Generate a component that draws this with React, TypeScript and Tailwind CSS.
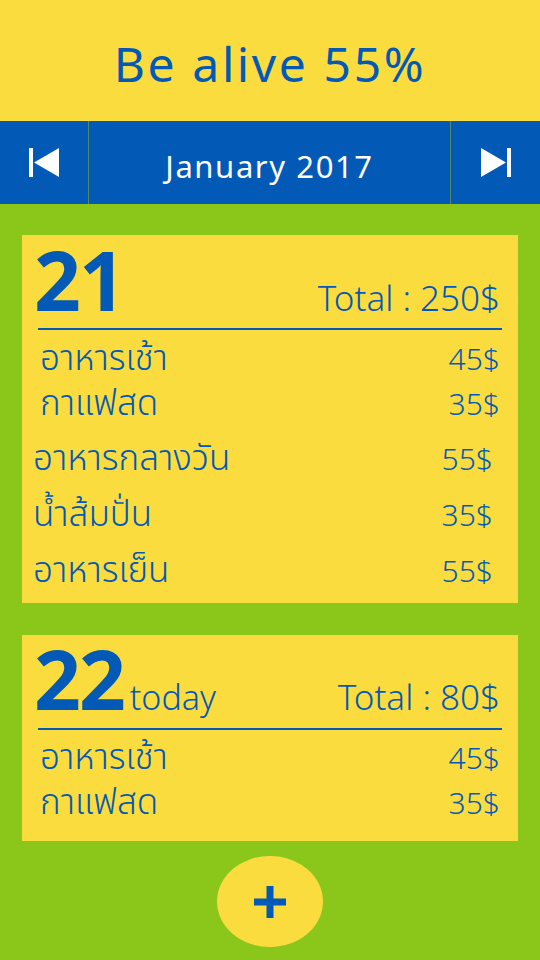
const days = [
  {
    day: '21',
    today: false,
    total: '250$',
    items: [
      { name: 'อาหารเช้า', price: '45$', wide: false },
      { name: 'กาแฟสด', price: '35$', wide: false },
      { name: 'อาหารกลางวัน', price: '55$', wide: true },
      { name: 'น้ำส้มปั่น', price: '35$', wide: true },
      { name: 'อาหารเย็น', price: '55$', wide: true },
    ],
  },
  {
    day: '22',
    today: true,
    total: '80$',
    items: [
      { name: 'อาหารเช้า', price: '45$', wide: false },
      { name: 'กาแฟสด', price: '35$', wide: false },
    ],
  },
];

const PrevIcon = () => (
  <svg width="31" height="29" viewBox="0 0 31 29" fill="#ffffff">
    <rect x="0" y="0" width="4" height="29" />
    <polygon points="30,0 30,29 5,14.5" />
  </svg>
);

const NextIcon = () => (
  <svg width="31" height="29" viewBox="0 0 31 29" fill="#ffffff">
    <polygon points="1,0 1,29 26,14.5" />
    <rect x="27" y="0" width="4" height="29" />
  </svg>
);

const App = () => {
  return (
    <div
      className="w-[540px] h-[960px] bg-[#8bc61b] flex flex-col text-[#0359b6]"
      style={{ fontFamily: "'Noto Sans', 'Noto Sans Thai', 'Noto Sans Thai UI', sans-serif" }}
    >
      {/* Header */}
      <div className="h-[121px] bg-[#fadc3f] flex items-center justify-center pt-[6px]">
        <h1 className="text-[48px] leading-none font-normal tracking-[2.6px]">Be alive 55%</h1>
      </div>

      {/* Month nav */}
      <div className="h-[83px] bg-[#0359b6] flex text-white">
        <button className="w-[89px] flex items-center justify-center border-r border-[#4f8a6a]">
          <PrevIcon />
        </button>
        <div className="flex-1 flex items-center justify-center pt-[7px]">
          <span className="text-[31px] leading-none tracking-[1.6px]">January 2017</span>
        </div>
        <button className="w-[90px] flex items-center justify-center border-l border-[#4f8a6a]">
          <NextIcon />
        </button>
      </div>

      {/* Day cards */}
      <div className="flex flex-col gap-[32px] mt-[31px] mx-[22px]">
        {days.map((d) => (
          <div key={d.day} className={`bg-[#fadc3f] ${d.today ? 'pt-[2px] pb-[18px]' : 'pt-[3px] pb-[6px]'}`}>
            <div className="flex items-baseline justify-between pl-[12px] pr-[18px]">
              <div className="flex items-baseline gap-[6px]">
                <span className="text-[82px] leading-none font-bold tracking-[-2px]">{d.day}</span>
                {d.today && <span className="text-[34px] leading-none font-light">today</span>}
              </div>
              <span className="text-[35px] leading-none font-light">Total : {d.total}</span>
            </div>
            <div className={`h-[2px] bg-[#0359b6] mx-[16px] ${d.today ? 'mt-[9px]' : 'mt-[8px]'}`} />
            <div className={d.today ? 'mt-[3px]' : 'mt-[4px]'}>
              {d.items.map((it, i) => (
                <div
                  key={i}
                  className={`flex items-baseline justify-between font-light ${
                    it.wide ? 'pl-[11px] pr-[25px]' : 'pl-[18px] pr-[18px]'
                  } ${it.wide && i > 0 && !d.items[i - 1].wide ? 'mt-[5px]' : ''}`}
                >
                  <span className={`text-[35px] ${it.wide ? 'leading-[56px]' : 'leading-[45px]'}`}>{it.name}</span>
                  <span className={`text-[30px] ${it.wide ? 'leading-[52px]' : 'leading-[41px]'}`}>{it.price}</span>
                </div>
              ))}
            </div>
          </div>
        ))}
      </div>

      {/* Add button */}
      <div className="flex justify-center mt-[15px]">
        <button className="w-[106px] h-[91px] rounded-[50%] bg-[#fadc3f] flex items-center justify-center">
          <svg width="32" height="32" viewBox="0 0 32 32" fill="#0359b6">
            <rect x="0" y="12.5" width="32" height="7" />
            <rect x="12.5" y="0" width="7" height="32" />
          </svg>
        </button>
      </div>
    </div>
  );
};

export default App;
